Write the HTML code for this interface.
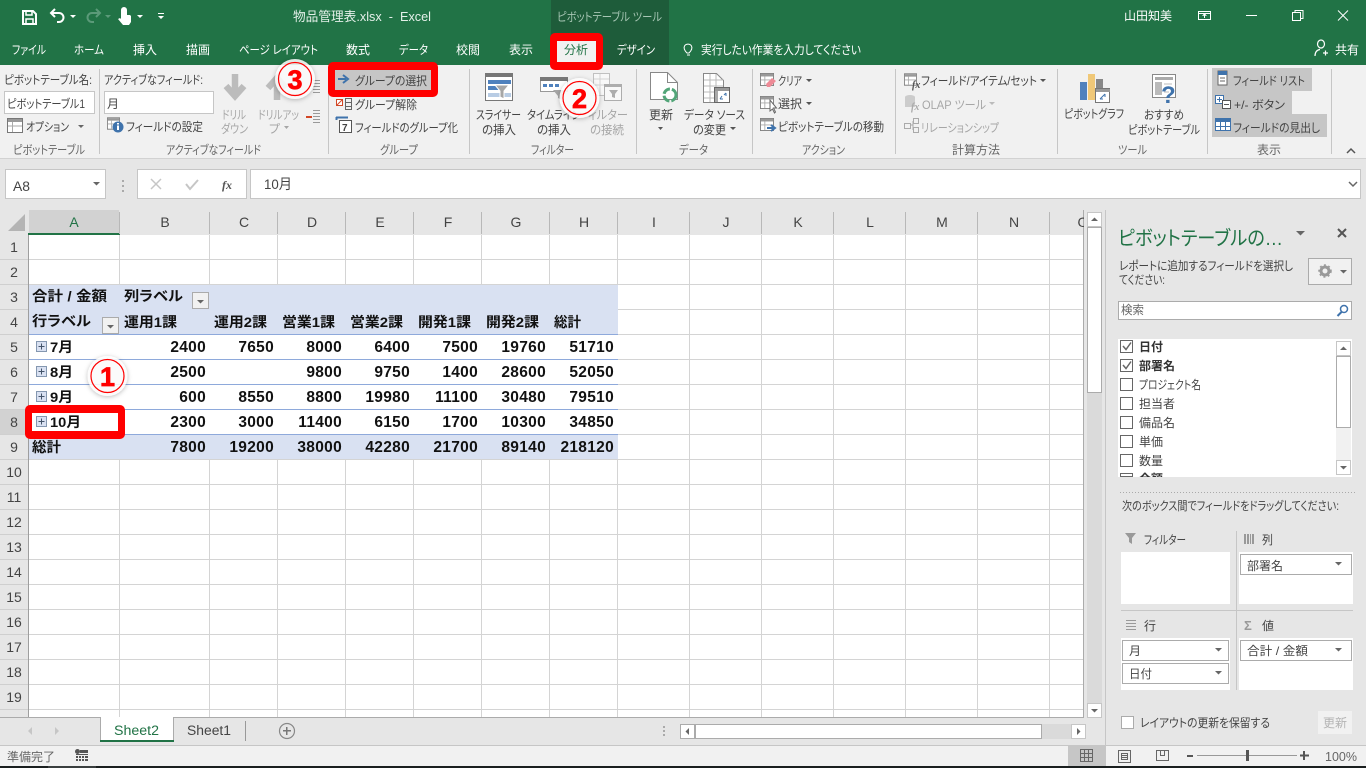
<!DOCTYPE html>
<html lang="ja"><head><meta charset="utf-8"><title>物品管理表.xlsx - Excel</title>
<style>
html,body{margin:0;padding:0;background:#e6e6e6;overflow:hidden}
svg{display:block}
text{font-family:"Liberation Sans","Noto Sans CJK JP",sans-serif;font-size:12px;fill:#444;font-feature-settings:"palt"}
.w{fill:#fff;font-size:12px}
.g{fill:#a6a6a6}
.l{fill:#666}
.h{font-size:14px;fill:#444;text-anchor:middle}
.b{font-size:14px;font-weight:bold;fill:#111}
.n{font-size:15.5px;font-weight:bold;fill:#111;letter-spacing:.3px;text-anchor:end}
.c{font-size:28px;font-weight:bold;fill:#f00;stroke:#f00;stroke-width:.7px;text-anchor:middle}
.line{shape-rendering:crispEdges}
</style></head><body>
<svg width="1366" height="768" viewBox="0 0 1366 768" xmlns="http://www.w3.org/2000/svg">
<defs>
<filter id="sh" x="-30%" y="-30%" width="160%" height="160%"><feDropShadow dx="0" dy="1" stdDeviation="2.5" flood-color="#000" flood-opacity=".3"/></filter>
<symbol id="tb" viewBox="0 0 16 15"><path d="M.5.5h15v14H.5z" fill="#fff" stroke="#777"/><path d="M1 1h14v3H1z" fill="#999"/><path d="M5.5 4v10M1 8h14" stroke="#aaa" fill="none"/></symbol>
</defs>
<!-- backgrounds -->
<rect width="1366" height="768" fill="#e6e6e6"/>
<rect width="1366" height="65" fill="#217346"/>
<rect x="551" width="118" height="65" fill="#1e5c3a"/>
<rect y="65" width="1366" height="93" fill="#f1f1f1"/>
<rect y="158" width="1366" height="1" fill="#d2d2d2" class="line"/>

<!-- QAT -->
<g fill="none" stroke="#fff" stroke-width="2">
<path d="M23 11h10l3 3v10H23z"/><path d="M26 11v4h6v-4M26 24v-5h7v5" stroke-width="1.5"/>
<path d="M55 9l-4 4 4 4M51 13h8a4.500 4.500 0 0 1 0 9h-2"/>
<path d="M96 9l4 4-4 4M100 13h-8a4.500 4.500 0 0 0 0 9h2" stroke="#5b9a79"/>
</g>
<path d="M121 10a3 3 0 0 1 6 0v5h3l1 1v6l-2 3h-6l-5-6 2-1 1 1z" fill="#fff"/>
<path d="M70 15h6l-3 3z" fill="#fff"/><path d="M105 15h6l-3 3z" fill="#5b9a79"/>
<path d="M137 15h6l-3 3zM158 16h6l-3 3z" fill="#fff"/><rect x="158" y="13" width="6" height="1" fill="#fff"/>
<text x="293" y="21" class="w" style="font-size:13px;fill:#e4f0e9" textLength="138" lengthAdjust="spacingAndGlyphs">物品管理表.xlsx&#160;&#160;-&#160;&#160;Excel</text>
<text x="557" y="21" style="fill:#a7c6b4" textLength="105" lengthAdjust="spacingAndGlyphs">ピボットテーブル ツール</text>
<text x="1124" y="20" class="w" textLength="48" lengthAdjust="spacingAndGlyphs">山田知美</text>
<g fill="none" stroke="#fff" class="line">
<path d="M1198.500 11.500h12v8h-12zM1198.500 13.500h12"/><path d="M1204.500 18v-3M1202.500 16l2-2 2 2"/>
<path d="M1246 15.500h11"/>
<path d="M1292.500 12.500h8v8h-8zM1295 12.500v-2h8v8h-2"/>
</g>
<path d="M1338 10.500l10 10M1348 10.500l-10 10" stroke="#fff" fill="none"/>

<!-- tabs -->
<text x="12" y="54" class="w" textLength="34" lengthAdjust="spacingAndGlyphs">ファイル</text>
<text x="74" y="54" class="w" textLength="30" lengthAdjust="spacingAndGlyphs">ホーム</text>
<text x="133" y="54" class="w" textLength="24" lengthAdjust="spacingAndGlyphs">挿入</text>
<text x="186" y="54" class="w" textLength="24" lengthAdjust="spacingAndGlyphs">描画</text>
<text x="239" y="54" class="w" textLength="79" lengthAdjust="spacingAndGlyphs">ページ レイアウト</text>
<text x="346" y="54" class="w" textLength="24" lengthAdjust="spacingAndGlyphs">数式</text>
<text x="399" y="54" class="w" textLength="29" lengthAdjust="spacingAndGlyphs">データ</text>
<text x="456" y="54" class="w" textLength="24" lengthAdjust="spacingAndGlyphs">校閲</text>
<text x="509" y="54" class="w" textLength="24" lengthAdjust="spacingAndGlyphs">表示</text>
<text x="617" y="54" class="w" textLength="38" lengthAdjust="spacingAndGlyphs">デザイン</text>
<text x="701" y="54" class="w" textLength="160" lengthAdjust="spacingAndGlyphs">実行したい作業を入力してください</text>
<text x="1335" y="54" class="w" textLength="24" lengthAdjust="spacingAndGlyphs">共有</text>
<path d="M687 53c-3-3-3.500-5-2.500-7a4.200 4.200 0 0 1 7 0c1 2 .5 4-2.500 7zM687 55h3" fill="none" stroke="#fff"/>
<path d="M1321 44m-3.500 0a3.500 4 0 1 0 7 0a3.500 4 0 1 0-7 0M1315 56c0-4 2-6 5-6.500M1323 53h5M1325.500 50.500v5" fill="none" stroke="#fff" stroke-width="1.200"/>

<!-- 分析 highlighted -->
<rect x="550" y="33" width="53" height="37" rx="5" fill="#f00"/>
<rect x="557" y="41" width="39" height="21" fill="#f1f1f1"/>
<text x="564" y="54" style="fill:#217346" textLength="24" lengthAdjust="spacingAndGlyphs">分析</text>

<!-- separators -->
<path class="line" d="M99.500 69v85M328.500 69v85M469.500 69v85M636.500 69v85M752.500 69v85M895.500 69v85M1057.500 69v85M1207.500 69v85M1331.500 69v85" stroke="#c6c6c6" fill="none"/>

<!-- group labels -->
<text x="13" y="154" class="l" textLength="72" lengthAdjust="spacingAndGlyphs">ピボットテーブル</text>
<text x="166" y="154" class="l" textLength="95" lengthAdjust="spacingAndGlyphs">アクティブなフィールド</text>
<text x="380" y="154" class="l" textLength="38" lengthAdjust="spacingAndGlyphs">グループ</text>
<text x="531" y="154" class="l" textLength="43" lengthAdjust="spacingAndGlyphs">フィルター</text>
<text x="679" y="154" class="l" textLength="29" lengthAdjust="spacingAndGlyphs">データ</text>
<text x="802" y="154" class="l" textLength="43" lengthAdjust="spacingAndGlyphs">アクション</text>
<text x="952" y="154" class="l" textLength="48" lengthAdjust="spacingAndGlyphs">計算方法</text>
<text x="1118" y="154" class="l" textLength="29" lengthAdjust="spacingAndGlyphs">ツール</text>
<text x="1257" y="154" class="l" textLength="24" lengthAdjust="spacingAndGlyphs">表示</text>
<path d="M1347 153l4-4 4 4" fill="none" stroke="#555" stroke-width="1.500"/>

<!-- pivot name group -->
<text x="4" y="84" textLength="88" lengthAdjust="spacingAndGlyphs">ピボットテーブル名:</text>
<rect class="line" x="4.500" y="91.500" width="90" height="22" fill="#fff" stroke="#c6c6c6"/>
<text x="7" y="108" textLength="78" lengthAdjust="spacingAndGlyphs">ピボットテーブル1</text>
<use href="#tb" x="7" y="118" width="16" height="15"/>
<text x="26" y="131" textLength="43" lengthAdjust="spacingAndGlyphs">オプション</text>
<path d="M78 125h6l-3 3z" fill="#666"/>
<text x="104" y="84" textLength="99" lengthAdjust="spacingAndGlyphs">アクティブなフィールド:</text>
<rect class="line" x="104.500" y="91.500" width="109" height="22" fill="#fff" stroke="#c6c6c6"/>
<text x="107" y="108">月</text>
<use href="#tb" x="107" y="117" width="13" height="13"/>
<circle cx="118" cy="127" r="5.500" fill="#3f73ac"/><rect x="117" y="125.500" width="2" height="4.500" fill="#fff"/><rect x="117" y="123" width="2" height="1.500" fill="#fff"/>
<text x="126" y="131" textLength="77" lengthAdjust="spacingAndGlyphs">フィールドの設定</text>
<path d="M235 74v23M226 86l9 10 9-10" fill="none" stroke="#bcbcbc" stroke-width="6.500"/>
<text x="222" y="119" class="g" textLength="24" lengthAdjust="spacingAndGlyphs">ドリル</text>
<text x="221" y="133" class="g" textLength="27" lengthAdjust="spacingAndGlyphs">ダウン</text>
<path d="M277 100V77M268 88l9-10 9 10" fill="none" stroke="#bcbcbc" stroke-width="6.500"/>
<text x="258" y="119" class="g" textLength="41" lengthAdjust="spacingAndGlyphs">ドリルアッ</text>
<text x="269" y="133" class="g" textLength="11" lengthAdjust="spacingAndGlyphs">プ</text>
<path d="M284 126h5l-2.500 3z" fill="#a6a6a6"/>
<path class="line" d="M313 80.500h7M313 83.500h7M313 86.500h7M313 89.500h7M313 92.500h7" stroke="#999" fill="none"/>
<path class="line" d="M306 116h6v2h-6z" fill="#d24726"/>
<path class="line" d="M313 110.500h7M313 113.500h7M313 116.500h7M313 119.500h7M313 122.500h7" stroke="#999" fill="none"/>

<!-- group select -->
<rect x="328" y="62" width="110" height="35" rx="5" fill="#f00"/>
<rect x="335" y="70" width="96" height="20" fill="#c6c6c6"/>
<path d="M338 79h8M343 75l5 4-5 4" fill="none" stroke="#3f73ac" stroke-width="2"/>
<text x="355" y="85" textLength="72" lengthAdjust="spacingAndGlyphs">グループの選択</text>
<rect class="line" x="336.500" y="99.500" width="6" height="6" fill="#fff" stroke="#d24726"/>
<path d="M337 105l5-5" stroke="#d24726"/>
<path class="line" d="M345.500 98.500h6v11h-6zM345 102.500h6M345 106.500h6" fill="none" stroke="#666"/>
<text x="355" y="109" textLength="62" lengthAdjust="spacingAndGlyphs">グループ解除</text>
<path class="line" d="M336 117.500h12M336.500 117v3" stroke="#3f73ac" fill="none" stroke-width="2"/>
<rect class="line" x="339.500" y="120.500" width="12" height="12" fill="#fff" stroke="#555"/>
<text x="342" y="131" style="font-size:10px;font-weight:bold">7</text>
<text x="355" y="132" textLength="103" lengthAdjust="spacingAndGlyphs">フィールドのグループ化</text>

<!-- filter group -->
<rect class="line" x="485.500" y="73.500" width="27" height="27" fill="#fff" stroke="#777"/>
<rect x="486" y="73" width="27" height="4" fill="#777"/>
<rect x="488" y="80" width="23" height="4" fill="#4f81bd"/>
<rect x="488" y="86" width="12" height="4" fill="#4f81bd"/>
<rect x="488" y="93" width="23" height="4" fill="#b8cce4"/>
<path d="M495 85h14l-5 6v8l-4-2v-6z" fill="#a6a6a6" stroke="#fff"/>
<text x="476" y="119" textLength="45" lengthAdjust="spacingAndGlyphs">スライサー</text>
<text x="482" y="134" textLength="34" lengthAdjust="spacingAndGlyphs">の挿入</text>
<rect class="line" x="540" y="77" width="28" height="4" fill="#777"/>
<rect class="line" x="540.500" y="77.500" width="27" height="14" fill="#fff" stroke="#999"/>
<rect x="540" y="77" width="28" height="4" fill="#777"/>
<path class="line" d="M543 84h4v3h-4zM549 84h4v3h-4zM555 84h4v3h-4z" fill="#4f81bd"/>
<path d="M553 90h14l-5 6v4l-4-2v-2z" fill="#a6a6a6"/>
<text x="527" y="119" textLength="54" lengthAdjust="spacingAndGlyphs">タイムライン</text>
<text x="537" y="134" textLength="34" lengthAdjust="spacingAndGlyphs">の挿入</text>
<g opacity=".55">
<rect class="line" x="593.500" y="73.500" width="16" height="22" fill="#fff" stroke="#999"/>
<path d="M594 79h15M594 85h15M600 74v21" stroke="#bbb"/>
<rect class="line" x="604.500" y="84.500" width="17" height="16" fill="#fff" stroke="#777"/>
<rect x="605" y="84" width="17" height="3" fill="#777"/>
<path d="M609 90h9l-3 4v4l-3-1v-3z" fill="#777"/>
</g>
<text x="588" y="119" class="g" textLength="40" lengthAdjust="spacingAndGlyphs">ィルター</text>
<text x="590" y="134" class="g" textLength="34" lengthAdjust="spacingAndGlyphs">の接続</text>

<!-- data group -->
<path d="M650.500 72.500h17l10 10v17h-27z" fill="#fff" stroke="#888"/><path d="M667.500 72.500v10h10" fill="none" stroke="#888"/>
<circle cx="670" cy="95" r="6" fill="none" stroke="#52a578" stroke-width="3" stroke-dasharray="8 2"/>
<text x="649" y="119" textLength="24" lengthAdjust="spacingAndGlyphs">更新</text>
<path d="M658 127h5l-2.500 3z" fill="#555"/>
<path d="M703.500 73.500h13l7 7v22h-20z" fill="#fff" stroke="#888"/>
<path d="M704 80h19M704 86h19M704 92h19M704 98h19M710 74v28M716 74v28" stroke="#bbb"/>
<rect class="line" x="714.500" y="87.500" width="15" height="15" fill="#fff" stroke="#666"/>
<rect x="715" y="88" width="14" height="3" fill="#999"/><rect x="715" y="91" width="3" height="11" fill="#aaa"/>
<path d="M720 99l2-3m2-1l2-2M726 93v3M720 99h3" stroke="#3f73ac" fill="none"/>
<text x="684" y="119" textLength="61" lengthAdjust="spacingAndGlyphs">データ ソース</text>
<text x="693" y="134" textLength="33" lengthAdjust="spacingAndGlyphs">の変更</text>
<path d="M730 127h6l-3 3z" fill="#555"/>

<!-- action group -->
<use href="#tb" x="760" y="73" width="14" height="13"/>
<path d="M766 84l6-6 4 3-6 6h-3z" fill="#ee8a96"/>
<text x="778" y="85" textLength="24" lengthAdjust="spacingAndGlyphs">クリア</text>
<path d="M806 79h6l-3 3zM806 102h6l-3 3z" fill="#555"/>
<use href="#tb" x="760" y="96" width="14" height="13"/>
<path d="M770 100v11l2.500-2 2 4 1-1-2-4h3z" fill="#fff" stroke="#666"/>
<text x="778" y="108" textLength="24" lengthAdjust="spacingAndGlyphs">選択</text>
<use href="#tb" x="760" y="118" width="14" height="13"/>
<path d="M767 128h7M771 125l4 3-4 3" fill="none" stroke="#3f73ac" stroke-width="2"/>
<text x="778" y="131" textLength="106" lengthAdjust="spacingAndGlyphs">ピボットテーブルの移動</text>

<!-- calc group -->
<use href="#tb" x="904" y="73" width="13" height="13"/>
<text x="912" y="88" style="font:italic bold 10px 'Liberation Serif',serif;fill:#555">fx</text>
<text x="921" y="85" textLength="116" lengthAdjust="spacingAndGlyphs">フィールド/アイテム/セット</text>
<path d="M1040 79h6l-3 3z" fill="#555"/>
<ellipse cx="910" cy="97" rx="5" ry="2" fill="#ccc"/><rect x="905" y="97" width="10" height="10" fill="#ccc"/>
<text x="911" y="110" style="font:italic bold 10px 'Liberation Serif',serif;fill:#aaa">fx</text>
<text x="922" y="109" class="g" textLength="64" lengthAdjust="spacingAndGlyphs">OLAP ツール</text>
<path d="M989 102h6l-3 3z" fill="#bbb"/>
<path class="line" d="M904.500 123.500h6v5h-6zM913.500 118.500h5v5h-5zM913.500 127.500h5v5h-5zM910 125h3M913 121v9" fill="none" stroke="#aaa"/>
<text x="921" y="132" class="g" textLength="78" lengthAdjust="spacingAndGlyphs">リレーションシップ</text>

<!-- tools -->
<rect x="1080" y="82" width="7" height="18" fill="#4f81bd"/>
<rect x="1088" y="74" width="7" height="26" fill="#f0c878"/>
<rect x="1096" y="79" width="7" height="21" fill="#888"/>
<rect class="line" x="1095.500" y="88.500" width="14" height="14" fill="#fff" stroke="#777"/>
<rect x="1096" y="89" width="14" height="3" fill="#999"/>
<path d="M1100 99l5-5M1105 94v3M1100 99h3" stroke="#3f73ac" fill="none"/>
<text x="1064" y="118" textLength="60" lengthAdjust="spacingAndGlyphs">ピボットグラフ</text>
<rect class="line" x="1152.500" y="74.500" width="23" height="23" fill="#fff" stroke="#888"/>
<rect x="1155" y="77" width="18" height="3" fill="#aaa"/><rect x="1155" y="82" width="7" height="13" fill="#bbb"/><path d="M1164 84h8M1164 88h8M1164 92h5" stroke="#bbb"/>
<text x="1161" y="103" style="font-size:24px;font-weight:bold;fill:#3f73ac">?</text>
<text x="1144" y="119" textLength="40" lengthAdjust="spacingAndGlyphs">おすすめ</text>
<text x="1128" y="134" textLength="72" lengthAdjust="spacingAndGlyphs">ピボットテーブル</text>

<!-- show group -->
<rect class="line" x="1212" y="68" width="100" height="23" fill="#c6c6c6"/>
<rect class="line" x="1212" y="91" width="80" height="23" fill="#c6c6c6"/>
<rect class="line" x="1212" y="114" width="115" height="23" fill="#c6c6c6"/>
<rect class="line" x="1218" y="71" width="9" height="14" fill="#fff" stroke="#666"/><rect x="1218" y="71" width="9" height="4" fill="#3f73ac"/><path d="M1220 78h5M1220 81h5" stroke="#666"/>
<text x="1233" y="85" textLength="72" lengthAdjust="spacingAndGlyphs">フィールド リスト</text>
<path class="line" d="M1215.500 95.500h8v8h-8z" fill="#fff" stroke="#3f73ac"/><path class="line" d="M1217 99.500h5M1219.500 97v5" stroke="#3f73ac"/>
<path class="line" d="M1222.500 100.500h8v8h-8z" fill="#fff" stroke="#555"/><path class="line" d="M1224 104.500h5" stroke="#555"/>
<text x="1234" y="109" textLength="51" lengthAdjust="spacingAndGlyphs">+/- ボタン</text>
<rect class="line" x="1215.500" y="118.500" width="15" height="12" fill="#fff" stroke="#3f73ac"/><rect x="1215" y="118" width="16" height="4" fill="#3f73ac"/><path class="line" d="M1216 126.500h14M1220.500 122v8M1225.500 122v8" stroke="#3f73ac"/>
<text x="1233" y="132" textLength="87" lengthAdjust="spacingAndGlyphs">フィールドの見出し</text>

<!-- formula bar -->
<rect class="line" x="5.500" y="169.500" width="100" height="29" fill="#fff" stroke="#c6c6c6"/>
<text x="13" y="191" style="font-size:14px" textLength="17" lengthAdjust="spacingAndGlyphs">A8</text>
<path d="M93 182h7l-3.500 3.500z" fill="#666"/>
<path class="line" d="M122 180h2v2h-2zM122 185h2v2h-2zM122 190h2v2h-2z" fill="#aaa"/>
<rect class="line" x="137.500" y="169.500" width="109" height="29" fill="#fff" stroke="#c6c6c6"/>
<path d="M151 179l10 10M161 179l-10 10" stroke="#c6c6c6" stroke-width="1.500"/>
<path d="M186 184l4 5 8-9" fill="none" stroke="#c6c6c6" stroke-width="2"/>
<text x="222" y="189" style="font:italic bold 12px 'Liberation Serif',serif;fill:#555">fx</text>
<rect class="line" x="250.500" y="169.500" width="1110" height="29" fill="#fff" stroke="#c6c6c6"/>
<text x="264" y="189" style="font-size:14px" textLength="28" lengthAdjust="spacingAndGlyphs">10月</text>
<path d="M1349 182l4 4 4-4" fill="none" stroke="#666" stroke-width="1.500"/>

<!-- sheet -->
<rect x="29" y="235" width="1054" height="482" fill="#fff"/>
<path class="line" stroke="#d4d4d4" fill="none" d="M119.500 235v482M209.500 235v482M277.500 235v482M345.500 235v482M413.500 235v482M481.500 235v482M549.500 235v482M617.500 235v482M689.500 235v482M761.500 235v482M833.500 235v482M905.500 235v482M977.500 235v482M1049.500 235v482M29 259.500h1054M29 284.500h1054M29 309.500h1054M29 334.500h1054M29 359.500h1054M29 384.500h1054M29 409.500h1054M29 434.500h1054M29 459.500h1054M29 484.500h1054M29 509.500h1054M29 534.500h1054M29 559.500h1054M29 584.500h1054M29 609.500h1054M29 634.500h1054M29 659.500h1054M29 684.500h1054M29 709.500h1054"/>
<rect class="line" x="1083" y="210" width="1" height="508" fill="#ababab"/>
<!-- headers -->
<rect class="line" y="210" width="1083" height="25" fill="#e6e6e6"/>
<rect class="line" x="29" y="210" width="90" height="23" fill="#d2d2d2"/>
<rect class="line" x="28" y="233" width="92" height="2" fill="#217346"/>
<rect class="line" x="0" y="410" width="28" height="25" fill="#d2d2d2"/>
<rect class="line" x="0" y="235" width="28" height="175" fill="#e6e6e6"/>
<rect class="line" x="0" y="435" width="28" height="283" fill="#e6e6e6"/>
<rect class="line" x="28" y="235" width="1" height="482" fill="#9e9e9e"/>
<path d="M25 214v17H8z" fill="#b4b4b4"/>
<path class="line" stroke="#b8b8b8" fill="none" d="M119.500 212v22M209.500 212v22M277.500 212v22M345.500 212v22M413.500 212v22M481.500 212v22M549.500 212v22M617.500 212v22M689.500 212v22M761.500 212v22M833.500 212v22M905.500 212v22M977.500 212v22M1049.500 212v22"/>
<path class="line" stroke="#cfcfcf" fill="none" d="M0 259.500h28M0 284.500h28M0 309.500h28M0 334.500h28M0 359.500h28M0 384.500h28M0 409.500h28M0 434.500h28M0 459.500h28M0 484.500h28M0 509.500h28M0 534.500h28M0 559.500h28M0 584.500h28M0 609.500h28M0 634.500h28M0 659.500h28M0 684.500h28M0 709.500h28"/>
<text class="h" x="74" y="227" style="fill:#217346">A</text><text class="h" x="165" y="227">B</text><text class="h" x="244" y="227">C</text><text class="h" x="312" y="227">D</text><text class="h" x="380" y="227">E</text><text class="h" x="448" y="227">F</text><text class="h" x="516" y="227">G</text><text class="h" x="584" y="227">H</text><text class="h" x="654" y="227">I</text><text class="h" x="726" y="227">J</text><text class="h" x="798" y="227">K</text><text class="h" x="870" y="227">L</text><text class="h" x="942" y="227">M</text><text class="h" x="1014" y="227">N</text><text class="h" x="1083" y="227">O</text>
<text class="h" x="14" y="252">1</text><text class="h" x="14" y="277">2</text><text class="h" x="14" y="302">3</text><text class="h" x="14" y="327">4</text><text class="h" x="14" y="352">5</text><text class="h" x="14" y="377">6</text><text class="h" x="14" y="402">7</text><text class="h" x="14" y="427">8</text><text class="h" x="14" y="452">9</text><text class="h" x="14" y="477">10</text><text class="h" x="14" y="502">11</text><text class="h" x="14" y="527">12</text><text class="h" x="14" y="552">13</text><text class="h" x="14" y="577">14</text><text class="h" x="14" y="602">15</text><text class="h" x="14" y="627">16</text><text class="h" x="14" y="652">17</text><text class="h" x="14" y="677">18</text><text class="h" x="14" y="702">19</text><text class="h" x="14" y="727">20</text>
<rect class="line" y="718" width="1083" height="28" fill="#e6e6e6"/>
<rect class="line" y="717" width="1084" height="1" fill="#ababab"/>

<!-- pivot -->
<rect class="line" x="29" y="285" width="589" height="50" fill="#d9e1f2"/>
<rect class="line" x="29" y="335" width="589" height="100" fill="#fff"/>
<rect class="line" x="29" y="435" width="589" height="25" fill="#d9e1f2"/>
<path class="line" stroke="#8ea9db" fill="none" d="M29 334.500h589M29 359.500h589M29 384.500h589M29 409.500h589M29 434.500h589"/>
<path class="line" stroke="#d4d4d4" fill="none" d="M29 459.500h589"/>
<text class="b" x="32" y="301" textLength="75" lengthAdjust="spacingAndGlyphs">合計 / 金額</text>
<text class="b" x="124" y="301" textLength="59" lengthAdjust="spacingAndGlyphs">列ラベル</text>
<rect class="line" x="192.500" y="292.500" width="16" height="16" fill="#f1f1f1" stroke="#ababab"/><path d="M197 300h7l-3.500 3.500z" fill="#666"/>
<text class="b" x="32" y="326" textLength="59" lengthAdjust="spacingAndGlyphs">行ラベル</text>
<rect class="line" x="102.500" y="317.500" width="16" height="16" fill="#f1f1f1" stroke="#ababab"/><path d="M107 325h7l-3.500 3.500z" fill="#666"/>
<text class="b" x="124" y="327" textLength="53" lengthAdjust="spacingAndGlyphs">運用1課</text>
<text class="b" x="214" y="327" textLength="53" lengthAdjust="spacingAndGlyphs">運用2課</text>
<text class="b" x="282" y="327" textLength="53" lengthAdjust="spacingAndGlyphs">営業1課</text>
<text class="b" x="350" y="327" textLength="53" lengthAdjust="spacingAndGlyphs">営業2課</text>
<text class="b" x="418" y="327" textLength="53" lengthAdjust="spacingAndGlyphs">開発1課</text>
<text class="b" x="486" y="327" textLength="53" lengthAdjust="spacingAndGlyphs">開発2課</text>
<text class="b" x="554" y="327" textLength="27" lengthAdjust="spacingAndGlyphs">総計</text>
<g class="line" fill="#d9e1f2" stroke="#8497b0">
<rect x="36.500" y="341.500" width="10" height="10"/><rect x="36.500" y="366.500" width="10" height="10"/><rect x="36.500" y="391.500" width="10" height="10"/>
</g>
<path class="line" d="M38.500 346.500h6M41.500 343.500v6M38.500 371.500h6M41.500 368.500v6M38.500 396.500h6M41.500 393.500v6" stroke="#44546a" fill="none"/>
<text class="b" x="50" y="352" textLength="23" lengthAdjust="spacingAndGlyphs">7月</text>
<text class="n" x="206" y="352">2400</text><text class="n" x="274" y="352">7650</text><text class="n" x="342" y="352">8000</text><text class="n" x="410" y="352">6400</text><text class="n" x="478" y="352">7500</text><text class="n" x="546" y="352">19760</text><text class="n" x="614" y="352">51710</text>
<text class="b" x="50" y="377" textLength="23" lengthAdjust="spacingAndGlyphs">8月</text>
<text class="n" x="206" y="377">2500</text><text class="n" x="342" y="377">9800</text><text class="n" x="410" y="377">9750</text><text class="n" x="478" y="377">1400</text><text class="n" x="546" y="377">28600</text><text class="n" x="614" y="377">52050</text>
<text class="b" x="50" y="402" textLength="23" lengthAdjust="spacingAndGlyphs">9月</text>
<text class="n" x="206" y="402">600</text><text class="n" x="274" y="402">8550</text><text class="n" x="342" y="402">8800</text><text class="n" x="410" y="402">19980</text><text class="n" x="478" y="402">11100</text><text class="n" x="546" y="402">30480</text><text class="n" x="614" y="402">79510</text>
<rect x="25" y="405" width="100" height="34" rx="5" fill="#f00"/>
<rect class="line" x="32" y="413" width="86" height="18" fill="#fff"/>
<rect class="line" x="36.500" y="416.500" width="10" height="10" fill="#d9e1f2" stroke="#8497b0"/>
<path class="line" d="M38.500 421.500h6M41.500 418.500v6" stroke="#44546a" fill="none"/>
<text class="b" x="50" y="427" textLength="31" lengthAdjust="spacingAndGlyphs">10月</text>
<text class="n" x="206" y="427">2300</text><text class="n" x="274" y="427">3000</text><text class="n" x="342" y="427">11400</text><text class="n" x="410" y="427">6150</text><text class="n" x="478" y="427">1700</text><text class="n" x="546" y="427">10300</text><text class="n" x="614" y="427">34850</text>
<text class="b" x="32" y="452" textLength="29" lengthAdjust="spacingAndGlyphs">総計</text>
<text class="n" x="206" y="452">7800</text><text class="n" x="274" y="452">19200</text><text class="n" x="342" y="452">38000</text><text class="n" x="410" y="452">42280</text><text class="n" x="478" y="452">21700</text><text class="n" x="546" y="452">89140</text><text class="n" x="614" y="452">218120</text>

<!-- callouts -->
<circle cx="107.500" cy="376" r="20" fill="#fff" fill-opacity=".85" filter="url(#sh)"/><circle cx="107.500" cy="376" r="16.500" fill="none" stroke="#f00" stroke-width="1.200"/><text class="c" x="107.500" y="386" style="font-size:27px">1</text>
<circle cx="295" cy="79" r="20" fill="#fff" fill-opacity=".85" filter="url(#sh)"/><circle cx="295" cy="79" r="16.500" fill="none" stroke="#f00" stroke-width="1.200"/><text class="c" x="295" y="89" style="font-size:27px">3</text>
<circle cx="579.500" cy="98" r="20" fill="#fff" fill-opacity=".85" filter="url(#sh)"/><circle cx="579.500" cy="98" r="16.500" fill="none" stroke="#f00" stroke-width="1.200"/><text class="c" x="579.500" y="108" style="font-size:27px">2</text>

<!-- vertical scrollbar -->
<rect class="line" x="1084" y="210" width="21" height="508" fill="#e6e6e6"/>
<rect class="line" x="1087" y="227" width="15" height="476" fill="#dadada"/>
<rect class="line" x="1087.500" y="212.500" width="14" height="14" fill="#fff" stroke="#c6c6c6"/><path d="M1091 221h7l-3.500-3.500z" fill="#666"/>
<rect class="line" x="1087.500" y="227.500" width="14" height="165" fill="#fff" stroke="#ababab"/>
<rect class="line" x="1087.500" y="703.500" width="14" height="14" fill="#fff" stroke="#c6c6c6"/><path d="M1091 709h7l-3.500 3.500z" fill="#666"/>
<rect class="line" x="1105" y="210" width="1" height="535" fill="#c6c6c6"/>

<!-- pivot pane -->
<text x="1118" y="245" style="font-size:20px;fill:#217346" textLength="165" lengthAdjust="spacingAndGlyphs">ピボットテーブルの…</text>
<path d="M1296 231h9l-4.500 4.500z" fill="#666"/>
<path d="M1338 229l8 8M1346 229l-8 8" stroke="#555" stroke-width="2"/>
<text x="1119" y="270" textLength="174" lengthAdjust="spacingAndGlyphs">レポートに追加するフィールドを選択し</text>
<text x="1119" y="284" textLength="46" lengthAdjust="spacingAndGlyphs">てください:</text>
<rect class="line" x="1308.500" y="258.500" width="43" height="26" fill="#f1f1f1" stroke="#ababab"/>
<circle cx="1325" cy="271" r="4" fill="none" stroke="#999" stroke-width="3"/><circle cx="1325" cy="271" r="6" fill="none" stroke="#999" stroke-width="1.500" stroke-dasharray="2 2.500"/>
<path d="M1340 270h7l-3.500 3.500z" fill="#666"/>
<rect class="line" x="1118.500" y="301.500" width="233" height="18" fill="#fff" stroke="#ababab"/>
<text x="1121" y="314" class="l" textLength="23" lengthAdjust="spacingAndGlyphs">検索</text>
<circle cx="1344" cy="309" r="3.500" fill="none" stroke="#3f73ac" stroke-width="1.500"/><path d="M1341.500 312l-4 4" stroke="#3f73ac" stroke-width="2"/>
<rect class="line" x="1118" y="339" width="234" height="138" fill="#fff"/>
<g class="line" fill="#fff" stroke="#666">
<rect x="1120.500" y="340.500" width="12" height="12"/><rect x="1120.500" y="359.500" width="12" height="12"/><rect x="1120.500" y="378.500" width="12" height="12"/><rect x="1120.500" y="397.500" width="12" height="12"/><rect x="1120.500" y="416.500" width="12" height="12"/><rect x="1120.500" y="435.500" width="12" height="12"/><rect x="1120.500" y="454.500" width="12" height="12"/><rect x="1120.500" y="473.500" width="12" height="3"/>
</g>
<path d="M1123 346l3 3.500 5-7M1123 365l3 3.500 5-7" fill="none" stroke="#666" stroke-width="1.500"/>
<text x="1139" y="351" style="font-weight:bold;fill:#333" textLength="24" lengthAdjust="spacingAndGlyphs">日付</text>
<text x="1139" y="370" style="font-weight:bold;fill:#333" textLength="36" lengthAdjust="spacingAndGlyphs">部署名</text>
<text x="1139" y="389" textLength="62" lengthAdjust="spacingAndGlyphs">プロジェクト名</text>
<text x="1139" y="408" textLength="36" lengthAdjust="spacingAndGlyphs">担当者</text>
<text x="1139" y="427" textLength="36" lengthAdjust="spacingAndGlyphs">備品名</text>
<text x="1139" y="446" textLength="24" lengthAdjust="spacingAndGlyphs">単価</text>
<text x="1139" y="465" textLength="24" lengthAdjust="spacingAndGlyphs">数量</text>
<svg x="1118" y="468" width="215" height="9"><text x="21" y="15" style="font-weight:bold;fill:#333" textLength="24" lengthAdjust="spacingAndGlyphs">金額</text></svg>
<rect class="line" x="1336" y="356" width="15" height="119" fill="#f1f1f1"/>
<rect class="line" x="1336.500" y="341.500" width="14" height="14" fill="#fff" stroke="#c6c6c6"/><path d="M1340 350h7l-3.500-3.500z" fill="#666"/>
<rect class="line" x="1336.500" y="356.500" width="14" height="71" fill="#fff" stroke="#ababab"/>
<rect class="line" x="1336.500" y="460.500" width="14" height="14" fill="#fff" stroke="#c6c6c6"/><path d="M1340 466h7l-3.500 3.500z" fill="#666"/>
<path class="line" d="M1120 492.500h236" stroke="#aaa" stroke-dasharray="1 2"/>
<text x="1122" y="510" textLength="217" lengthAdjust="spacingAndGlyphs">次のボックス間でフィールドをドラッグしてください:</text>

<rect class="line" x="1121" y="552" width="109" height="52" fill="#fff"/>
<rect class="line" x="1239" y="552" width="114" height="52" fill="#fff"/>
<rect class="line" x="1121" y="638" width="109" height="52" fill="#fff"/>
<rect class="line" x="1239" y="638" width="114" height="52" fill="#fff"/>
<rect class="line" x="1236" y="531" width="1" height="159" fill="#c6c6c6"/>
<rect class="line" x="1121" y="610" width="232" height="1" fill="#c6c6c6"/>
<path d="M1125 533h11l-4 5v6l-3-2v-4z" fill="#999"/>
<text x="1144" y="544" textLength="42" lengthAdjust="spacingAndGlyphs">フィルター</text>
<path class="line" d="M1244 534h2v10h-2zM1247 534h2v10h-2zM1250 534h1v10h-1zM1252 534h2v10h-2z" fill="#999"/>
<text x="1262" y="544" textLength="11" lengthAdjust="spacingAndGlyphs">列</text>
<path class="line" d="M1126 620h10v1h-10zM1126 623h10v1h-10zM1126 626h10v1h-10zM1126 629h10v1h-10z" fill="#999"/>
<text x="1144" y="630" textLength="12" lengthAdjust="spacingAndGlyphs">行</text>
<text x="1244" y="630" style="font-size:13px;font-weight:bold;fill:#999">Σ</text>
<text x="1262" y="630" textLength="12" lengthAdjust="spacingAndGlyphs">値</text>
<g class="line" fill="#fff" stroke="#ababab">
<rect x="1240.500" y="554.500" width="111" height="20"/><rect x="1122.500" y="640.500" width="106" height="20"/><rect x="1122.500" y="663.500" width="106" height="20"/><rect x="1240.500" y="640.500" width="111" height="20"/>
</g>
<text x="1247" y="570" textLength="36" lengthAdjust="spacingAndGlyphs">部署名</text>
<text x="1129" y="655">月</text>
<text x="1129" y="678" textLength="23" lengthAdjust="spacingAndGlyphs">日付</text>
<text x="1247" y="655" textLength="61" lengthAdjust="spacingAndGlyphs">合計 / 金額</text>
<path d="M1335 562h7l-3.500 3.500zM1215 648h7l-3.500 3.500zM1215 671h7l-3.500 3.500zM1335 648h7l-3.500 3.500z" fill="#666"/>
<rect class="line" x="1121.500" y="716.500" width="12" height="12" fill="#fff" stroke="#ababab"/>
<text x="1140" y="727" textLength="130" lengthAdjust="spacingAndGlyphs">レイアウトの更新を保留する</text>
<rect class="line" x="1318" y="711" width="34" height="23" fill="#f1f1f1"/>
<text x="1323" y="727" style="fill:#b4b4b4" textLength="24" lengthAdjust="spacingAndGlyphs">更新</text>

<!-- sheet tabs -->
<path d="M32 727l-4 4 4 4zM55 727l4 4-4 4z" fill="#c6c6c6"/>
<rect class="line" x="100" y="717" width="74" height="25" fill="#fff"/>
<path class="line" d="M100.500 717v25M173.500 717v25" stroke="#ababab"/>
<rect class="line" x="100" y="740" width="74" height="2" fill="#217346"/>
<text x="114" y="735" style="font-size:13.500px;fill:#217346" textLength="45" lengthAdjust="spacingAndGlyphs">Sheet2</text>
<text x="187" y="735" style="font-size:13.500px" textLength="44" lengthAdjust="spacingAndGlyphs">Sheet1</text>
<rect class="line" x="245" y="721" width="1" height="20" fill="#999"/>
<circle cx="287" cy="731" r="7.500" fill="none" stroke="#888" stroke-width="1.200"/><path class="line" d="M283 730.500h8M286.500 727v8" stroke="#777" stroke-width="1.500"/>
<path class="line" d="M663 726h2v2h-2zM663 730h2v2h-2zM663 734h2v2h-2z" fill="#aaa"/>
<rect class="line" x="695" y="724" width="376" height="15" fill="#dadada"/>
<rect class="line" x="680.500" y="724.500" width="14" height="14" fill="#fff" stroke="#ababab"/><path d="M689 728v7l-3.500-3.500z" fill="#666"/>
<rect class="line" x="695.500" y="724.500" width="346" height="14" fill="#fff" stroke="#ababab"/>
<rect class="line" x="1071.500" y="724.500" width="14" height="14" fill="#fff" stroke="#c6c6c6"/><path d="M1077 728v7l3.500-3.500z" fill="#666"/>
<rect class="line" y="745" width="1366" height="1" fill="#c6c6c6"/>

<!-- status -->
<rect class="line" y="746" width="1366" height="20" fill="#f1f1f1"/>
<text x="7" y="761" class="l" textLength="48" lengthAdjust="spacingAndGlyphs">準備完了</text>
<circle cx="77.500" cy="751.500" r="2.500" fill="#555"/>
<path class="line" d="M80 750h8v3h-8zM76 754h12v1H76zM76 756h2v2h-2zM79 756h2v2h-2zM82 756h2v2h-2zM85 756h3v2h-3zM76 759h2v2h-2zM79 759h2v2h-2zM82 759h2v2h-2zM85 759h3v2h-3z" fill="#555"/>
<rect class="line" x="1068" y="746" width="38" height="20" fill="#c6c6c6"/>
<path class="line" d="M1080.500 749.500h12v12h-12zM1084.500 749.500v12M1088.500 749.500v12M1080.500 753.500h12M1080.500 757.500h12" fill="none" stroke="#666"/>
<path class="line" d="M1118.500 750.500h12v12h-12zM1121.500 753.500h6v6h-6zM1122 755.500h5M1122 757.500h5" fill="none" stroke="#666"/>
<path class="line" d="M1156.500 750.500v10h12v-10zM1160.500 750.500v5h4v-5" fill="none" stroke="#666"/>
<rect class="line" x="1187" y="755" width="6" height="2" fill="#555"/>
<rect class="line" x="1197" y="755" width="100" height="1" fill="#999"/>
<rect class="line" x="1246" y="750" width="3" height="11" fill="#555"/>
<path class="line" d="M1300 755.500h9M1304 751v9" stroke="#555" stroke-width="2"/>
<text x="1325" y="761" class="l" style="font-size:12.500px" textLength="32" lengthAdjust="spacingAndGlyphs">100%</text>
<rect class="line" y="766" width="1366" height="2" fill="#1a1f1f"/>
<rect class="line" x="48" y="766" width="48" height="2" fill="#3a3f3f"/>
</svg>
</body></html>
